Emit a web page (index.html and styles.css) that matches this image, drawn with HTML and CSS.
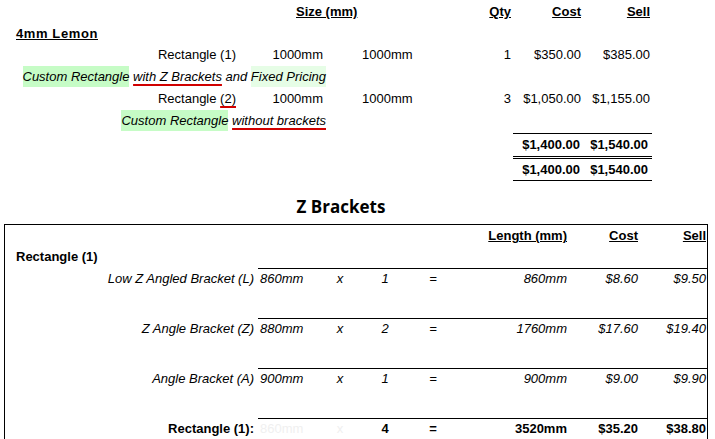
FILE: index.html
```
<!DOCTYPE html>
<html>
<head>
<meta charset="utf-8">
<link rel="stylesheet" href="styles.css">
</head>
<body>
<div class="quote">
  <div class="hdr size">Size (mm)</div>
  <div class="hdr qty">Qty</div>
  <div class="hdr cost">Cost</div>
  <div class="hdr sell">Sell</div>

  <div class="group">4mm Lemon</div>

  <div class="cell label">Rectangle (1)</div>
  <div class="cell dim1">1000mm</div>
  <div class="cell dim2">1000mm</div>
  <div class="cell num">1</div>
  <div class="cell num">$350.00</div>
  <div class="cell num">$385.00</div>

  <div class="desc"><span class="hl">Custom Rectangle</span> <span class="redline">with Z Brackets</span> and <span class="hl light">Fixed Pricing</span></div>

  <div class="cell label">Rectangle <span class="redline">(2)</span></div>
  <div class="cell dim1">1000mm</div>
  <div class="cell dim2">1000mm</div>
  <div class="cell num">3</div>
  <div class="cell num">$1,050.00</div>
  <div class="cell num">$1,155.00</div>

  <div class="desc"><span class="hl">Custom Rectangle</span> <span class="redline">without brackets</span></div>

  <div class="totals">
    <div class="trow first">
      <div class="tcost">$1,400.00</div>
      <div class="tsell">$1,540.00</div>
    </div>
    <div class="trow second">
      <div class="tcost">$1,400.00</div>
      <div class="tsell">$1,540.00</div>
    </div>
  </div>
</div>

<h2 class="title">Z Brackets</h2>

<div class="brackets">
  <div class="brow head">
    <div></div><div></div><div></div><div></div><div></div>
    <div class="len">Length (mm)</div>
    <div class="bcost">Cost</div>
    <div class="bsell">Sell</div>
  </div>
  <div class="bgroup">Rectangle (1)</div>

  <div class="brow item">
    <div class="blabel">Low Z Angled Bracket (L)</div>
    <div class="c piece">860mm</div>
    <div class="c mid">x</div>
    <div class="c mid">1</div>
    <div class="c mid">=</div>
    <div class="c len">860mm</div>
    <div class="c bcost">$8.60</div>
    <div class="c bsell">$9.50</div>
  </div>

  <div class="brow item">
    <div class="blabel">Z Angle Bracket (Z)</div>
    <div class="c piece">880mm</div>
    <div class="c mid">x</div>
    <div class="c mid">2</div>
    <div class="c mid">=</div>
    <div class="c len">1760mm</div>
    <div class="c bcost">$17.60</div>
    <div class="c bsell">$19.40</div>
  </div>

  <div class="brow item">
    <div class="blabel">Angle Bracket (A)</div>
    <div class="c piece">900mm</div>
    <div class="c mid">x</div>
    <div class="c mid">1</div>
    <div class="c mid">=</div>
    <div class="c len">900mm</div>
    <div class="c bcost">$9.00</div>
    <div class="c bsell">$9.90</div>
  </div>

  <div class="brow item sum">
    <div class="blabel">Rectangle (1):</div>
    <div class="c piece ghost">860mm</div>
    <div class="c mid ghost">x</div>
    <div class="c mid">4</div>
    <div class="c mid">=</div>
    <div class="c len">3520mm</div>
    <div class="c bcost">$35.20</div>
    <div class="c bsell">$38.80</div>
  </div>
</div>
</body>
</html>
```
FILE: styles.css
```
html, body {
  margin: 0;
  padding: 0;
  background: #fff;
}
body {
  font-family: "Liberation Sans", Arial, sans-serif;
  font-size: 13px;
  color: #000;
  overflow: hidden;
}

/* top quote table */
.quote {
  display: grid;
  grid-template-columns: 236px 87px 137px 51px 70px 69px;
  width: 650px;
}
.hdr {
  font-weight: bold;
  text-decoration: underline;
  line-height: 24px;
  text-align: right;
}
.hdr.size {
  grid-column: 2 / 4;
  text-align: left;
  padding-left: 60px;
}
.group {
  grid-column: 1 / -1;
  font-weight: bold;
  text-decoration: underline;
  letter-spacing: 0.6px;
  line-height: 20px;
  padding-left: 16px;
}
.cell {
  line-height: 22px;
  white-space: nowrap;
}
.label, .dim1, .num {
  text-align: right;
}
.dim2 {
  padding-left: 39px;
}
.desc {
  grid-column: 1 / -1;
  padding-right: 324px;
  text-align: right;
  font-style: italic;
  line-height: 22px;
  white-space: nowrap;
}
.hl {
  background: #c6fcc6;
  padding: 3px 0 3px;
}
.hl.light {
  background: #e6fde6;
}
.redline {
  text-decoration: underline;
  text-decoration-color: #d00000;
  text-decoration-thickness: 2px;
  text-underline-offset: 3px;
}

.totals {
  grid-column: 5 / 7;
  margin: 1px -2px 0 2px;
  font-weight: bold;
  border-top: 1px solid #000;
  border-bottom: 1px solid #000;
}
.trow {
  display: grid;
  grid-template-columns: 68px 71px;
  text-align: right;
}
.trow.first {
  line-height: 22px;
  border-bottom: 3px double #000;
}
.trow.second {
  line-height: 21px;
}
.tcost {
  padding-right: 1px;
}
.tsell {
  padding-right: 4px;
}

/* title */
.title {
  margin: 14px 0 5px;
  padding-right: 33px;
  font-family: "Open Sans", "DejaVu Sans", sans-serif;
  font-size: 17px;
  font-weight: bold;
  line-height: 24px;
  text-align: center;
}

/* brackets table */
.brackets {
  margin-left: 4px;
  width: 702px;
  border: 1px solid #000;
  padding-bottom: 40px;
}
.brow {
  display: grid;
  grid-template-columns: 253px 60px 44px 46px 50px 110px 71px 68px;
  white-space: nowrap;
}
.brow.head {
  font-weight: bold;
  line-height: 21px;
}
.brow.head .len,
.brow.head .bcost,
.brow.head .bsell {
  text-decoration: underline;
}
.bgroup {
  font-weight: bold;
  line-height: 22px;
  padding-left: 11px;
}
.item {
  font-style: italic;
  line-height: 19px;
}
.item .c {
  border-top: 1px solid #000;
  height: 49px;
}
.blabel {
  text-align: right;
  padding: 1px 4px 0 0;
}
.piece {
  padding-left: 2px;
}
.mid {
  text-align: center;
}
.len, .bcost, .bsell {
  text-align: right;
  padding-right: 1px;
}
.sum {
  font-style: normal;
  font-weight: bold;
}
.ghost {
  color: #f0f0f0;
  font-weight: normal;
}
```
